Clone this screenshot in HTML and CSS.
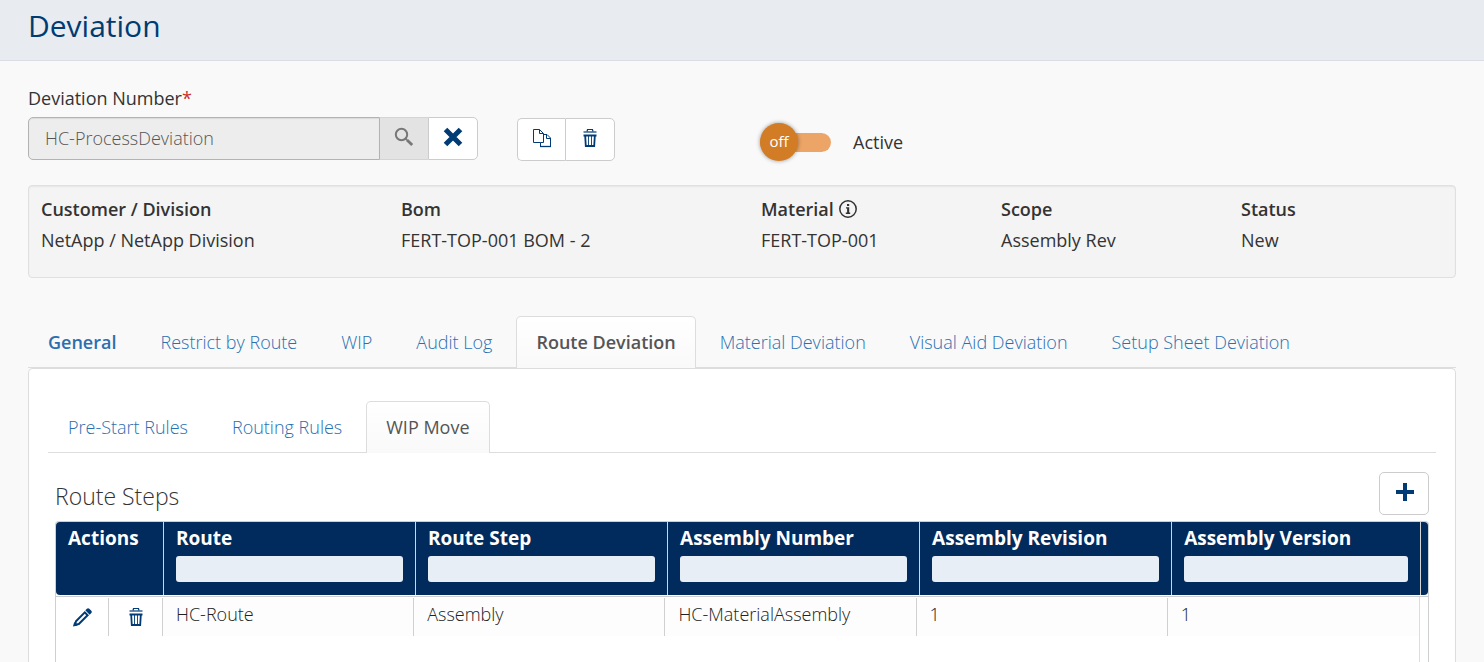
FILE: index.html
```html
<!DOCTYPE html>
<html lang="en">
<head>
<meta charset="utf-8">
<meta name="viewport" content="width=device-width, initial-scale=1">
<title>Deviation</title>
<link rel="stylesheet" href="styles.css">
</head>
<body>
<svg class="sprite" aria-hidden="true">
  <symbol id="trash" viewBox="0 0 18 20">
    <path d="M6 3.500 6.500 1.500h5L12 3.500" fill="none" stroke="currentColor" stroke-width="1.200"/>
    <path d="M2.500 4h13" stroke="currentColor" stroke-width="1.200"/>
    <path d="M2.500 7.500h13" stroke="currentColor" stroke-width="2"/>
    <path d="M4.200 8l.6 10h8.400l.6-10" fill="none" stroke="currentColor" stroke-width="1.800"/>
    <path d="M7.500 8v10M10.500 8v10" stroke="currentColor" stroke-width=".9"/>
  </symbol>
</svg>
<header class="page-header"><h1 class="page-title">Deviation</h1></header>
<main class="content">
  <form class="toolbar">
    <div class="toolbar-left">
      <label class="field-label" for="number">Deviation Number<span class="required">*</span></label>
      <div class="controls">
        <div class="group">
          <input class="number-input" id="number" type="text" value="HC-ProcessDeviation" readonly>
          <button class="search-button" type="button" aria-label="Search">
            <svg width="20" height="20" viewBox="0 0 20 20" fill="none" stroke="currentColor"><circle cx="7.500" cy="7.500" r="5.700" stroke-width="2"/><path d="M11.500 11.500l1.500 1.500" stroke-width="1.800"/><path d="M13 13l5.200 5" stroke-width="2.800"/></svg>
          </button>
          <button class="button button-end" type="button" aria-label="Clear">
            <svg width="20" height="20" viewBox="0 0 20 20"><path d="M2.500 2.500l15 15M17.500 2.500l-15 15" stroke="currentColor" stroke-width="5"/></svg>
          </button>
        </div>
        <div class="group group-actions">
          <button class="button button-start" type="button" aria-label="Copy">
            <svg width="20" height="20" viewBox="0 0 20 20" fill="none" stroke="currentColor"><path d="M8.500 14.500h-7v-13h6l4 4v3M7.500 1.500v4h4" stroke-width="1"/><path d="M11.500 6.500h3.500l3.500 3.500v8.500h-10v-4h3z M14.500 6.500v4h4" stroke-width="1"/><path d="M8 18.500h11" stroke-width="1.300"/></svg>
          </button>
          <button class="button button-end" type="button" aria-label="Delete"><svg width="18" height="20"><use href="#trash"/></svg></button>
        </div>
      </div>
    </div>
    <div class="toggle">
      <input class="toggle-input" id="active" type="checkbox">
      <label class="toggle-label" for="active"><span class="track"><span class="knob">off</span></span>Active</label>
    </div>
  </form>

  <dl class="summary">
    <div class="summary-item"><dt>Customer / Division</dt><dd>NetApp / NetApp Division</dd></div>
    <div class="summary-item"><dt>Bom</dt><dd>FERT-TOP-001 BOM - 2</dd></div>
    <div class="summary-item"><dt>Material <svg class="info" width="20" height="20" viewBox="0 0 20 20"><circle cx="10" cy="9" r="8.200" fill="none" stroke="currentColor" stroke-width="1.500"/><path fill="currentColor" d="M9 4h2.200v2H9zM8 7.200h3.200v5.400h1V14H7.800v-1.400h1.300V8.600H8z"/></svg></dt><dd>FERT-TOP-001</dd></div>
    <div class="summary-item"><dt>Scope</dt><dd>Assembly Rev</dd></div>
    <div class="summary-item"><dt>Status</dt><dd>New</dd></div>
  </dl>

  <nav class="tabs">
    <a class="tab tab-bold" href="#general">General</a>
    <a class="tab" href="#restrict">Restrict by Route</a>
    <a class="tab" href="#wip">WIP</a>
    <a class="tab" href="#audit">Audit Log</a>
    <a class="tab tab-active tab-bold" href="#route">Route Deviation</a>
    <a class="tab" href="#material">Material Deviation</a>
    <a class="tab" href="#visual">Visual Aid Deviation</a>
    <a class="tab" href="#setup">Setup Sheet Deviation</a>
  </nav>
  <section class="panel">
    <nav class="tabs">
      <a class="tab" href="#prestart">Pre-Start Rules</a>
      <a class="tab" href="#routing">Routing Rules</a>
      <a class="tab tab-active" href="#move">WIP Move</a>
    </nav>
    <div class="steps">
      <div class="steps-head">
        <h2 class="steps-title">Route Steps</h2>
        <button class="button add-button" type="button" aria-label="Add"><svg width="20" height="20" viewBox="0 0 20 20"><path d="M11 1v18M2 10h18" stroke="currentColor" stroke-width="4"/></svg></button>
      </div>
      <div class="grid">
        <table class="grid-head">
          <colgroup><col class="col-actions"><col class="col-data"><col class="col-data"><col class="col-data"><col class="col-data"><col><col class="col-gutter"></colgroup>
          <thead><tr>
            <th>Actions</th>
            <th><label for="f1">Route</label><input class="filter" id="f1" type="text"></th>
            <th><label for="f2">Route Step</label><input class="filter" id="f2" type="text"></th>
            <th><label for="f3">Assembly Number</label><input class="filter" id="f3" type="text"></th>
            <th><label for="f4">Assembly Revision</label><input class="filter" id="f4" type="text"></th>
            <th><label for="f5">Assembly Version</label><input class="filter" id="f5" type="text"></th>
            <td></td>
          </tr></thead>
        </table>
        <div class="grid-scroll">
          <table class="grid-body">
            <colgroup><col class="col-edit"><col class="col-delete"><col><col><col><col><col></colgroup>
            <tbody><tr>
              <td class="action"><button class="icon-button" type="button" aria-label="Edit"><svg width="20" height="20" viewBox="0 0 20 20"><path d="M4 14.200 12.800 5.400l2.800 2.800L6.800 17 3 17.800z" fill="none" stroke="currentColor" stroke-width="2"/><path fill="currentColor" d="M1 19.500l1.200-4.500 3.500 3.500zM13.300 3.300l1.600-1.600q1.200-1 2.400 0l2 2q1 1.200 0 2.400l-1.600 1.600z"/></svg></button></td>
              <td class="action"><button class="icon-button" type="button" aria-label="Delete"><svg width="18" height="20"><use href="#trash"/></svg></button></td>
              <td>HC-Route</td><td>Assembly</td><td>HC-MaterialAssembly</td><td>1</td><td>1</td>
            </tr></tbody>
          </table>
        </div>
      </div>
    </div>
  </section>
</main>
</body>
</html>
```
FILE: styles.css
```css
* { box-sizing: border-box; }
html { height: 100%; }
body {
  margin: 0;
  height: 100vh;
  display: flex;
  flex-direction: column;
  background: #f9f9f9;
  color: #333;
  font: 400 18px/24px "Open Sans", "Noto Sans", sans-serif;
}
button, input { font: inherit; }
svg { display: block; }
.sprite { position: absolute; width: 0; height: 0; }
.page-header {
  padding: 6px 28px 14px;
  background: #e8ebf0;
  border-bottom: 1px solid #d9dee6;
}
.page-title { margin: 0; color: #003b71; font-size: 30px; line-height: 40px; font-weight: 400; }
.content { flex: 1; min-height: 0; display: flex; flex-direction: column; padding: 25px 28px 0; }
.toolbar { display: grid; grid-template-columns: 732px 1fr; align-items: end; }
.field-label { display: block; margin-bottom: 7px; font-weight: 500; }
.required { color: #c9302c; }
.controls { display: flex; align-items: center; gap: 39px; }
.group { display: flex; height: 43px; }
.group-actions { position: relative; top: 1px; }
.number-input {
  width: 352px;
  padding: 0 16px 2px;
  border: 1px solid #b3b3b3;
  border-radius: 5px 0 0 5px;
  background: #ededed;
  color: #555;
  font-weight: 300;
  box-shadow: inset 0 1px 1px rgba(0, 0, 0, .08);
}
.search-button {
  width: 48px;
  padding: 0 0 4px;
  display: grid;
  place-items: center;
  border: solid #d4d4d4;
  border-width: 1px 0;
  background: #e3e3e3;
  color: #777;
}
.button {
  width: 50px;
  padding: 0 0 4px;
  display: grid;
  place-items: center;
  border: 1px solid #ccc;
  border-radius: 5px;
  background: #fff;
  color: #003b76;
}
.button-start { border-radius: 5px 0 0 5px; border-right: 0; width: 48px; }
.button-end { border-radius: 0 5px 5px 0; }
.toggle { position: relative; height: 30px; }
.toggle-input { position: absolute; opacity: 0; }
.toggle-label { display: flex; align-items: center; gap: 22px; font-weight: 500; }
.track {
  position: relative;
  width: 71px;
  height: 19px;
  border-radius: 10px;
  background: #eca467;
}
.knob {
  position: absolute;
  left: 0;
  top: -10px;
  width: 38px;
  height: 38px;
  border-radius: 50%;
  background: #d27c26;
  color: #fff;
  font-size: 15px;
  line-height: 37px;
  text-align: center;
  box-shadow: 0 0 4px rgba(0, 0, 0, .4);
}
.summary {
  margin: 25px 0 38px;
  min-height: 93px;
  padding: 8px 12px;
  display: grid;
  grid-template-columns: 360fr 360fr 240fr 240fr 202fr;
  border: 1px solid #e0e0e0;
  border-radius: 4px;
  background: #f4f4f4;
  box-shadow: inset 0 1px 2px rgba(0, 0, 0, .06);
}
.summary-item { line-height: 31px; }
.summary dt { display: flex; align-items: center; gap: 4px; font-weight: 600; }
.summary dd { margin: 0; font-weight: 500; }
.tabs { display: flex; border-bottom: 1px solid #ddd; gap: 4px; }
.tab {
  margin-bottom: -1px;
  padding: 13px 19px 14px;
  border: 1px solid transparent;
  border-bottom: 0;
  border-radius: 5px 5px 0 0;
  color: #2a70b0;
  font-weight: 300;
  text-decoration: none;
}
.tab-active {
  color: #555;
  border-color: #ddd;
  background: linear-gradient(#fff, #f9f9f9);
  font-weight: 500;
}
.tab-bold { font-weight: 600; }
.panel {
  flex: 1;
  display: flex;
  flex-direction: column;
  padding: 32px 19px 0;
  border: 1px solid #ddd;
  border-bottom: 0;
  border-radius: 5px 5px 0 0;
  background: #fff;
}
.steps { flex: 1; display: flex; flex-direction: column; padding: 19px 7px 0; }
.steps-head { display: flex; justify-content: space-between; align-items: center; margin-bottom: 6px; }
.steps-title { margin: 0; padding-top: 4px; font-size: 23px; line-height: 30px; font-weight: 300; }
.add-button { height: 43px; }
.grid {
  flex: 1;
  display: flex;
  flex-direction: column;
  border: 1px solid #ccd0d0;
  border-bottom: 0;
  border-radius: 4px 4px 0 0;
}
table { width: 100%; table-layout: fixed; border-collapse: separate; border-spacing: 0; }
.grid-head { height: 73px; background: #002b5c; border-radius: 4px; }
.grid-head th { padding: 4px 12px 0; border-right: 1px solid #d4d4d4; vertical-align: top; text-align: left; color: #fff; font-size: 19px; font-weight: 700; }
.grid-head label { display: block; }
.filter {
  display: block;
  width: 100%;
  height: 26px;
  margin-top: 6px;
  border: 0;
  border-radius: 3px;
  background: #e7eef6;
}
.col-actions { width: 108px; }
.col-data { width: 18.37%; }
.col-gutter { width: 7px; }
.col-edit { width: 53px; }
.col-delete { width: 54px; }
.grid-scroll { flex: 1; margin-top: 1px; padding: 1px 9px 0 0; border-top: 1px solid #ccc; background: linear-gradient(#ddd, #ddd) right 8px top / 1px 100% no-repeat; }
.grid-body td { height: 38px; padding: 0 0 6px 13px; background: #fdfdfd; border-right: 1px solid #d0d0d0; color: #222; font-weight: 300; }
.grid-body td:last-child { border-right: 0; }
.grid-body .action { padding: 0; background: #fff; }
.icon-button { display: grid; place-items: center; width: 100%; padding: 0; border: 0; background: none; color: #003b76; }
```
